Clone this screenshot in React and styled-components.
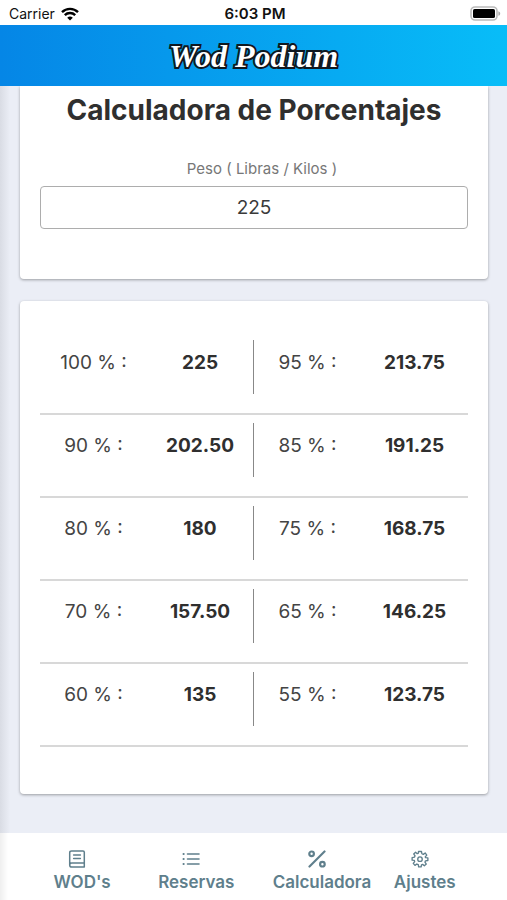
import React, { useState } from 'react';
import styled, { createGlobalStyle } from 'styled-components';

const GlobalStyle = createGlobalStyle`
  *, *::before, *::after {
    box-sizing: border-box;
  }
  body {
    margin: 0;
    background: #ebeef6;
    color: #2f2f2f;
    font-family: Inter, 'Liberation Sans', sans-serif;
  }
`;

const Page = styled.div`
  display: flex;
  flex-direction: column;
  min-height: 100vh;
  background: linear-gradient(to right, #d9dce4, #ebeef6 10px);
`;

const StatusBar = styled.div`
  display: grid;
  grid-template-columns: 1fr auto 1fr;
  align-items: center;
  height: 25px;
  padding: 2px 6px 0 9px;
  background: #fff;
  color: #111;
  font-size: 14px;
  line-height: 20px;
`;

const Carrier = styled.span`
  display: flex;
  align-items: center;
  gap: 6px;
`;

const Clock = styled.span`
  font-size: 15px;
  font-weight: 600;
`;

const StyledBatteryIcon = styled.svg`
  justify-self: end;
`;

const Header = styled.header`
  display: flex;
  align-items: center;
  justify-content: center;
  height: 61px;
  background: linear-gradient(to right, #0586e6, #08bdf8);
`;

const Brand = styled.span`
  color: #fff;
  font-family: Mistral, 'Liberation Serif', serif;
  font-size: 32px;
  font-style: italic;
  font-weight: 700;
  line-height: 40px;
  -webkit-text-stroke: 4px #101820;
  paint-order: stroke fill;
`;

const Content = styled.main`
  display: flex;
  flex: 1;
  flex-direction: column;
  gap: 22px;
  padding: 0 19px 39px 20px;
`;

const Card = styled.section`
  padding: ${props => (props.$scrolled ? '4px 20px 50px' : '31px 20px 47px')};
  border-radius: ${props => (props.$scrolled ? '0 0 4px 4px' : '4px')};
  background: #fff;
  box-shadow: 0 1px 3px rgba(0, 0, 0, 0.35);
  clip-path: ${props => (props.$scrolled ? 'inset(0 -6px -6px)' : 'none')};
`;

const Title = styled.h1`
  margin: 0 0 29px;
  font-size: 28px;
  font-weight: 700;
  line-height: 40px;
  text-align: center;
  white-space: nowrap;
`;

const WeightLabel = styled.label`
  display: block;
  margin-bottom: 7px;
  padding-left: 16px;
  color: #777;
  font-size: 15px;
  line-height: 20px;
  text-align: center;
`;

const WeightInput = styled.input`
  display: block;
  width: 100%;
  height: 43px;
  border: 1px solid #adadad;
  border-radius: 4px;
  background: #fff;
  color: #3a3a3a;
  font-family: inherit;
  font-size: 19px;
  text-align: center;
`;

const PercentTable = styled.table`
  width: 100%;
  border-collapse: collapse;
  table-layout: fixed;
`;

const Row = styled.tr`
  border-bottom: 2px solid #d8d8d8;
`;

const Cell = styled.td`
  padding: 8px 0 19px;
  font-size: 19px;
  font-weight: ${props => (props.$strong ? 700 : 400)};
  text-align: center;
`;

const LabelCell = styled(Cell).attrs({ as: 'th', scope: 'row' })`
  color: #444;
`;

const CellBox = styled.div`
  height: 54px;
  padding-top: 10px;
  border-right: ${props => (props.$divided ? '1px solid #888' : '0')};
  line-height: 26px;
`;

const TabBar = styled.nav`
  display: grid;
  grid-template-columns: 5fr 5fr 6fr 3fr;
  height: 67px;
  padding: 17px 48px 0 25px;
  background: linear-gradient(to right, #efefef, #fff 8px);
`;

const Tab = styled.a`
  display: flex;
  flex-direction: column;
  align-items: center;
  min-width: 0;
  color: #5f7f8c;
  font-size: 17px;
  font-weight: 600;
  line-height: 28px;
  text-decoration: none;
`;

const TabIcon = styled.svg`
  flex: none;
  margin-right: 10px;
  fill: none;
  stroke: currentColor;
  stroke-linecap: round;
  stroke-linejoin: round;
`;

const WifiIcon = () => (
  <svg width="18" height="14" viewBox="0 0 18 14" fill="none" stroke="#000" strokeWidth="2.4" aria-hidden="true">
    <path d="M1 5.2a11.4 11.4 0 0 1 16 0" />
    <path d="M3.8 8.2a7.4 7.4 0 0 1 10.4 0" />
    <path d="M9 13.6 6.2 10.8a4 4 0 0 1 5.6 0Z" fill="#000" stroke="none" />
  </svg>
);

const BatteryIcon = () => (
  <StyledBatteryIcon width="31" height="15" viewBox="0 0 31 15" aria-hidden="true">
    <rect x="1" y="1" width="26" height="13" rx="4" fill="#fff" stroke="#bbb" strokeWidth="1.6" />
    <rect x="3" y="3" width="22" height="9" rx="1.6" fill="#000" />
    <path d="M28.4 5.2c2.4.8 2.4 3.8 0 4.6Z" fill="#aaa" />
  </StyledBatteryIcon>
);

const BookIcon = () => (
  <TabIcon width="18" height="18" viewBox="0 0 18 18" strokeWidth="1.5" aria-hidden="true">
    <path d="M1.7 15V2.8Q1.7.9 3.6.9H15Q16.3.9 16.3 2.2V17.1H3.8A2.1 2.1 0 0 1 3.8 12.9H16.3" />
    <path d="M5.6 5H12.4M5.6 8.5H12.4" />
  </TabIcon>
);

const ListIcon = () => (
  <TabIcon width="18" height="18" viewBox="0 0 18 18" strokeWidth="1.6" aria-hidden="true">
    <path d="M5.5 4H17M5.5 9H17M5.5 14H17" />
    <path d="M1.5 4h.2M1.5 9h.2M1.5 14h.2" strokeWidth="2" />
  </TabIcon>
);

const PercentIcon = () => (
  <TabIcon width="18" height="18" viewBox="0 0 18 18" strokeWidth="2.2" aria-hidden="true">
    <path d="M16.5 1.5 1.5 16.5" />
    <circle cx="3.6" cy="3.8" r="2.3" />
    <circle cx="14.4" cy="14.2" r="2.3" />
  </TabIcon>
);

const GearIcon = () => (
  <TabIcon width="18" height="18" viewBox="0 0 24 24" strokeWidth="1.8" aria-hidden="true">
    <path d="M10 2H14L14.5 5 16.4 5.8 18.9 3.9 21 6.8 19 9.2 19.5 10.2 22.5 10.6V14L19.3 14.4 18.6 16.2 20.4 18.8 17.8 21 15.5 19.2 14 19.7 13.5 22.5H10.2L9.7 19.5 7.8 18.7 5.3 20.5 3 17.9 4.9 15.5 4.4 13.9 1.5 13.5V10.1L4.6 9.6 5.4 7.8 3.6 5.3 6.1 3 8.3 4.9 9.6 4.4Z" />
    <circle cx="12" cy="12.2" r="3" />
  </TabIcon>
);

const PERCENT_ROWS = [
  [100, 95],
  [90, 85],
  [80, 75],
  [70, 65],
  [60, 55]
];

const TABS = [
  { display: "WOD's", path: '#wods', icon: BookIcon },
  { display: 'Reservas', path: '#reservas', icon: ListIcon },
  { display: 'Calculadora', path: '#calculadora', icon: PercentIcon },
  { display: 'Ajustes', path: '#ajustes', icon: GearIcon }
];

const formatWeight = (weight, percent) => {
  const value = (Number(weight) * percent) / 100;
  return Number.isInteger(value) ? String(value) : value.toFixed(2);
};

const PercentRow = ({ percents, weight }) => (
  <Row>
    {percents.map((percent, index) => (
      <React.Fragment key={percent}>
        <LabelCell>
          <CellBox>{`${percent} % :`}</CellBox>
        </LabelCell>
        <Cell $strong>
          <CellBox $divided={index === 0}>{formatWeight(weight, percent)}</CellBox>
        </Cell>
      </React.Fragment>
    ))}
  </Row>
);

const App = () => {
  const [weight, setWeight] = useState('225');

  return (
    <>
      <GlobalStyle />
      <Page>
        <StatusBar>
          <Carrier>
            Carrier
            <WifiIcon />
          </Carrier>
          <Clock>6:03 PM</Clock>
          <BatteryIcon />
        </StatusBar>
        <Header>
          <Brand>Wod Podium</Brand>
        </Header>
        <Content>
          <Card $scrolled>
            <Title>Calculadora de Porcentajes</Title>
            <WeightLabel htmlFor="weight">Peso ( Libras / Kilos )</WeightLabel>
            <WeightInput
              id="weight"
              inputMode="decimal"
              value={weight}
              onChange={event => setWeight(event.target.value)}
            />
          </Card>
          <Card>
            <PercentTable>
              <tbody>
                {PERCENT_ROWS.map(percents => (
                  <PercentRow key={percents[0]} percents={percents} weight={weight} />
                ))}
              </tbody>
            </PercentTable>
          </Card>
        </Content>
        <TabBar>
          {TABS.map(({ display, path, icon: Icon }) => (
            <Tab key={path} href={path}>
              <Icon />
              {display}
            </Tab>
          ))}
        </TabBar>
      </Page>
    </>
  );
};

export default App;
